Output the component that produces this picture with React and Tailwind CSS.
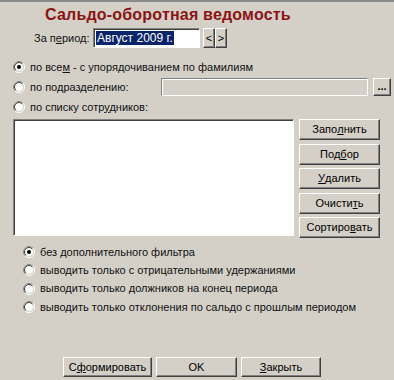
import React from 'react';

// Windows classic radio drawn as a small svg
const Radio = ({ checked }) => (
  <svg width="12" height="12" viewBox="0 0 12 12" className="shrink-0">
    <circle cx="6" cy="6" r="5.5" fill="none" stroke="#ffffff" />
    <path d="M2.1 9.9 A5.5 5.5 0 0 1 9.9 2.1" fill="none" stroke="#808080" />
    <circle cx="6" cy="6" r="4.5" fill="#ffffff" stroke="#d4d0c8" />
    <path d="M2.8 9.2 A4.5 4.5 0 0 1 9.2 2.8" fill="none" stroke="#404040" />
    {checked && <circle cx="6" cy="6" r="2" fill="#000000" />}
  </svg>
);

const raised =
  'border border-t-white border-l-white border-b-[#404040] border-r-[#404040] shadow-[inset_-1px_-1px_0_#808080] bg-[#d4d0c8]';
const sunken =
  'border border-t-[#808080] border-l-[#808080] border-b-white border-r-white shadow-[inset_1px_1px_0_#404040]';

const Btn = ({ children, className = '' }) => (
  <div className={`${raised} flex items-center justify-center text-black ${className}`}>{children}</div>
);

const sideButtons = [
  ['Запо', 'л', 'нить'],
  ['Под', 'б', 'ор'],
  ['', 'У', 'далить'],
  ['Очисти', 'т', 'ь'],
  ['Сортиро', 'в', 'ать'],
];

const filters = [
  'без дополнительного фильтра',
  'выводить только с отрицательными удержаниями',
  'выводить только должников на конец периода',
  'выводить только отклонения по сальдо с прошлым периодом',
];

export default function App() {
  return (
    <div
      className="w-[394px] h-[380px] bg-[#d4d0c8] border-t-2 border-t-[#8a8a8a] text-[11px] leading-[13px] text-[#111] overflow-hidden"
      style={{ fontFamily: '"Liberation Sans", Arial, sans-serif' }}
    >
      {/* title */}
      <div className="mt-[4px] pl-[45px] h-[18px] text-[16px] leading-[18px] font-bold tracking-[0.2px] text-[#8b1414]">
        Сальдо-оборотная ведомость
      </div>

      {/* period */}
      <div className="mt-[4px] h-[20px] flex items-center">
        <span className="ml-[34px] w-[59px]">
          За п<u>е</u>риод:
        </span>
        <div className={`${sunken} w-[107px] h-[20px] bg-white flex items-center pl-[2px]`}>
          <span className="bg-[#0a246a] text-white px-[1px] leading-[14px] text-[12px]">Август 2009 г.</span>
        </div>
        <div className="ml-[3px] flex">
          <Btn className="w-[12px] h-[20px] text-[11px]">&lt;</Btn>
          <Btn className="w-[12px] h-[20px] text-[11px]">&gt;</Btn>
        </div>
      </div>

      {/* selection mode */}
      <div className="mt-[9px] pl-[13px] flex flex-col">
        <div className="h-[20px] flex items-center gap-[5px]">
          <Radio checked />
          <span>
            по все<u>м</u> - с упорядочиванием по фамилиям
          </span>
        </div>
        <div className="h-[20px] flex items-center gap-[5px]">
          <Radio />
          <span className="w-[126px]">по подразделению:</span>
          <div className="w-[207px] h-[18px] border border-t-[#808080] border-l-[#808080] border-b-white border-r-white shadow-[inset_1px_1px_0_#ffffff]" />
          <Btn className="w-[18px] h-[18px] font-bold leading-[10px] items-end pb-[4px]">...</Btn>
        </div>
        <div className="h-[20px] flex items-center gap-[5px]">
          <Radio />
          <span>
            по списку сотр<u>у</u>дников:
          </span>
        </div>
      </div>

      {/* list + buttons */}
      <div className="mt-[2px] pl-[13px] flex gap-[5px]">
        <div className={`${sunken} w-[281px] h-[117px] bg-white`} />
        <div className="w-[81px] flex flex-col gap-[3.5px]">
          {sideButtons.map(([a, u, b], i) => (
            <Btn key={i} className="h-[21px]">
              {a}
              <u>{u}</u>
              {b}
            </Btn>
          ))}
        </div>
      </div>

      {/* filters */}
      <div className="mt-[5px] pl-[23px] flex flex-col">
        {filters.map((t, i) => (
          <div key={i} className="h-[18.3px] flex items-center gap-[5px]">
            <Radio checked={i === 0} />
            <span>{t}</span>
          </div>
        ))}
      </div>

      {/* bottom buttons */}
      <div className="mt-[41px] pl-[63px] flex gap-[4px]">
        <Btn className="w-[89px] h-[20px]">
          С<u>ф</u>ормировать
        </Btn>
        <Btn className="w-[81px] h-[20px]">OK</Btn>
        <Btn className="w-[80px] h-[20px]">
          <u>З</u>акрыть
        </Btn>
      </div>
    </div>
  );
}
